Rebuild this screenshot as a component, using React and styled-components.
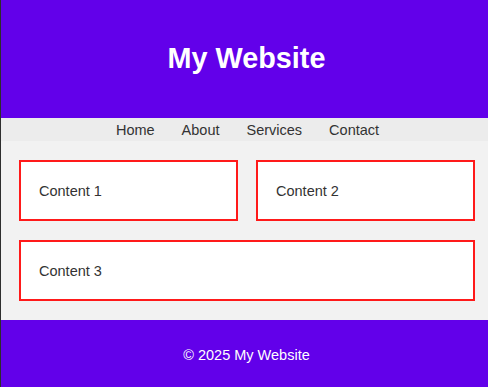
import React from "react";
import styled, { createGlobalStyle } from "styled-components";

const GlobalStyle = createGlobalStyle`
  *, *::before, *::after {
    box-sizing: border-box;
  }
  html, body {
    margin: 0;
    padding: 0;
    background: #f2f2f2;
  }
  body {
    font-family: "Liberation Sans", Arial, sans-serif;
    border-left: 1px solid #2e2e2e;
  }
`;

const Header = styled.header`
  background: #6200ea;
  color: #fff;
  height: 118px;
  display: flex;
  align-items: center;
  justify-content: center;
  padding: 0 0 2px 4px;
`;

const Title = styled.h1`
  margin: 0;
  font-size: 28.8px;
  line-height: 33px;
  font-weight: bold;
`;

const Nav = styled.nav`
  background: #ececec;
  height: 23px;
  display: flex;
  align-items: center;
  justify-content: center;
  gap: 27px;
  padding: 1px 0 0 6px;
`;

const NavLink = styled.a`
  color: #333;
  text-decoration: none;
  font-size: 14.5px;
  line-height: 17px;
  cursor: pointer;
`;

const Main = styled.main`
  display: grid;
  grid-template-columns: 1fr 1fr;
  gap: 19px 18px;
  padding: 19px 13px 19px 18px;
`;

const Card = styled.section`
  grid-column: ${(p) => (p.$wide ? "1 / -1" : "auto")};
  height: 61px;
  display: flex;
  align-items: center;
  background: #fff;
  border: 2px solid #ff1a1a;
  padding: 1px 18px 0;
  color: #333;
  font-size: 14.5px;
  line-height: 17px;
`;

const Footer = styled.footer`
  background: #6200ea;
  color: #fff;
  height: 67px;
  display: flex;
  align-items: center;
  justify-content: center;
  font-size: 14.5px;
  line-height: 17px;
  padding: 4px 0 0 4px;
`;

export default function App() {
  const links = ["Home", "About", "Services", "Contact"];
  return (
    <>
      <GlobalStyle />
      <Header>
        <Title>My Website</Title>
      </Header>
      <Nav>
        {links.map((l) => (
          <NavLink key={l}>{l}</NavLink>
        ))}
      </Nav>
      <Main>
        <Card>Content 1</Card>
        <Card>Content 2</Card>
        <Card $wide>Content 3</Card>
      </Main>
      <Footer>© 2025 My Website</Footer>
    </>
  );
}
